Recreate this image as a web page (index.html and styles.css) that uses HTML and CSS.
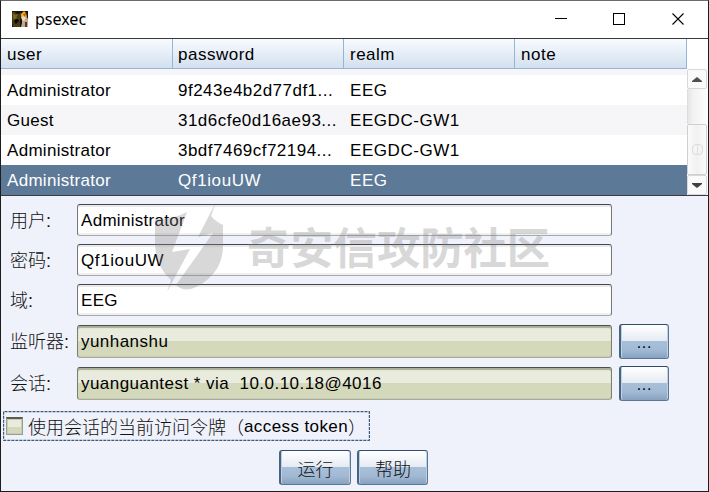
FILE: index.html
```
<!DOCTYPE html>
<html lang="zh-CN">
<head>
<meta charset="utf-8">
<title>psexec</title>
<link rel="stylesheet" href="styles.css">
</head>
<body>
<div class="window">
  <header class="titlebar">
    <svg class="app-icon" width="16" height="16" viewBox="0 0 16 16">
      <rect width="16" height="16" fill="#17130e"/>
      <path d="M0 1h3l2 2h2l2-2v4L8 9v7H1L0 9z" fill="#4b3c13"/>
      <path d="M1 2l2 2 3-1-2 4 3 2H2L1 6z" fill="#7c651d"/>
      <path d="M3 8h3l1 2-3 3-2-2z" fill="#0b0b0a"/>
      <path d="M10 5h4l2 3v8H9l1-4z" fill="#c2a890"/>
      <path d="M9 3l3-3 2 2 1 4-3-1-3 1z" fill="#e9b51d"/>
      <path d="M9 6l3-1 2 2-2 3-2-1z" fill="#f2dda8"/>
      <path d="M11 3l3-1-1 4z" fill="#d84b18"/>
      <path d="M13 11h2v5h-2z" fill="#4d3b35"/>
    </svg>
    <span class="title">psexec</span>
    <svg class="controls" width="156" height="14" viewBox="0 0 156 14" shape-rendering="crispEdges">
      <path d="M0 6.5h12" stroke="#000" fill="none"/>
      <rect x="58.500" y="1.500" width="11" height="11" stroke="#000" fill="none"/>
      <path d="M117.500 1.500l11 11m0-11l-11 11" stroke="#000" stroke-width="1.100" fill="none" shape-rendering="auto"/>
    </svg>
  </header>
  <section class="table">
    <div class="grid">
      <div class="row head"><span>user</span><span>password</span><span>realm</span><span>note</span></div>
      <div class="sliver"></div>
      <div class="row"><span>Administrator</span><span class="hash">9f243e4b2d77df1...</span><span class="caps">EEG</span><span></span></div>
      <div class="row alt"><span>Guest</span><span class="hash">31d6cfe0d16ae93...</span><span class="caps">EEGDC-GW1</span><span></span></div>
      <div class="row"><span>Administrator</span><span class="hash">3bdf7469cf72194...</span><span class="caps">EEGDC-GW1</span><span></span></div>
      <div class="row selected"><span>Administrator</span><span class="wide">Qf1iouUW</span><span class="caps">EEG</span><span></span></div>
    </div>
    <div class="scrollbar">
      <div class="corner"></div>
      <div class="arrow"><svg width="10" height="5"><path d="M0 5V4L5 0l5 4v1z" fill="#505050"/></svg></div>
      <div class="track"></div>
      <div class="thumb"><i></i></div>
      <div class="arrow"><svg width="10" height="5"><path d="M0 0h10v1L5 5 0 1z" fill="#404040"/></svg></div>
    </div>
  </section>
  <main class="form">
    <div class="line"><label>用户:</label><div class="field">Administrator</div></div>
    <div class="line"><label>密码:</label><div class="field wide">Qf1iouUW</div></div>
    <div class="line"><label>域:</label><div class="field">EEG</div></div>
    <div class="line pick"><label>监听器:</label><div class="field green">yunhanshu</div><div class="btn more">...</div></div>
    <div class="line pick"><label>会话:</label><div class="field green">yuanguantest * via&nbsp; 10.0.10.18@4016</div><div class="btn more">...</div></div>
    <div class="check"><i class="box"></i><span>使用会话的当前访问令牌（</span><span class="latin">access token</span><span>）</span>
      <svg class="focus" width="367" height="30"><rect x=".500" y=".500" width="366" height="29" rx="1" fill="none" stroke="#3d5b7b" stroke-width="1.400" stroke-dasharray="3 1"/></svg>
    </div>
    <div class="actions"><div class="btn run">运行</div><div class="btn help">帮助</div></div>
  </main>
  <div class="watermark">
    <svg width="72" height="92" viewBox="0 0 72 92">
      <path d="M2 18Q19 19 34 11L19 51L37 48L14 91L18 79Q3 66 2 43z"/>
      <path d="M63 1L45 36L60 32L23 84Q34 95 54 79Q70 66 70 45V24Q63 21 58 15z"/>
    </svg>
    <span>奇安信攻防社区</span>
  </div>
</div>
</body>
</html>
```
FILE: styles.css
```
* { box-sizing: border-box; }
body { margin: 0; font: 17px "Liberation Sans", "Noto Sans CJK SC", sans-serif; letter-spacing: .3px; color: #000; }
.window { position: relative; width: 709px; height: 492px; background: #eff2fb; border: 1px solid #1d1d1d; border-top-color: #6b6b6b; overflow: hidden; }
.titlebar { height: 37px; background: #fff; display: flex; align-items: center; padding-left: 11px; }
.app-icon { display: block; margin-top: -1px; }
.title { font: 16px "Noto Sans", sans-serif; letter-spacing: 0; margin: -1px 0 0 7px; flex: 1; }
.controls { display: block; margin-right: -3px; margin-top: -2px; }
.table { height: 158px; border-top: 1px solid #3a3a3a; border-bottom: 1px solid #3a3c44; display: flex; background: #fff; }
.grid { width: 686px; }
.row { display: grid; grid-template-columns: 172px 171px 171px 172px; height: 30px; line-height: 31px; }
.row span { padding-left: 6px; white-space: pre; overflow: hidden; }
.row span:not(:first-child) { padding-left: 5px; }
.head { background: linear-gradient(#f8fbff, #d3e0ef); border-bottom: 1px solid #94b5d5; letter-spacing: .5px; }
.head span { border-right: 1px solid #94b5d5; }
.head span:nth-child(n+3) { padding-left: 6px; }
.sliver { height: 6px; background: #f6f6f9; }
.alt { background: #f6f6f9; }
.selected { background: #5c7997; color: #fff; }
.row .caps:not(:first-child) { letter-spacing: .55px; padding-left: 6px; }
.row .hash { letter-spacing: .48px; }
.wide { letter-spacing: .6px; }
.scrollbar { width: 20px; display: flex; flex-direction: column; }
.corner { height: 30px; }
.arrow { height: 20px; border: 1px solid #d8d8d8; background: #fafafa; display: flex; align-items: center; justify-content: center; border-radius: 2px; flex: none; }
.track { height: 35px; background: linear-gradient(90deg, #e5e5e5, #f1f1f1 25%, #fdfdfd); border-left: 1px solid #ddd; }
.thumb { flex: 1; border: 1px solid #cfcfcf; border-radius: 2px; background: linear-gradient(90deg, #fafafa, #f1f1f1 50%, #fafafa); display: flex; align-items: center; justify-content: center; }
.thumb i { width: 11px; height: 11px; border: 1px solid #ddd; border-radius: 4px; background: linear-gradient(90deg, #f4f4f4 45%, #ddd 50%, #f4f4f4 55%); }
.form { padding: 8px 0 0; }
.line { display: flex; height: 33px; margin-bottom: 7px; align-items: flex-start; }
.line label { width: 76px; padding-left: 9px; font-size: 18px; font-weight: 300; line-height: 34px; letter-spacing: 0; color: #111; }
.field { width: 535px; height: 32px; border: 1px solid #a8a8a8; border-top: 1px solid #48484c; border-left-color: #777; border-right-color: #777; border-radius: 3px; background: #fff; box-shadow: inset 0 2px 1px #e9e9eb, inset 0 -2px 0 #f0f0f0; padding-left: 3px; line-height: 31px; white-space: pre; }
.pick { height: 35px; margin: 0 0 7px; align-items: flex-start; }
.pick label { line-height: 37px; }
.green { height: 33px; margin-top: 1px; letter-spacing: .46px; line-height: 32px; border-color: #4c5144 #7b806e #a6aa98; background: linear-gradient(#e9ecdc 50%, #d5d9bc 50%); box-shadow: inset 0 2px 1px #a9af96, inset 0 -1px 0 #c9cdb8; }
.btn { height: 35px; border: 1px solid #587696; border-top: 1px solid #2f4e6e; border-left: 2px solid #456583; border-radius: 3px; background: linear-gradient(#fff, #e5ebf3 49%, #a8bfd9 50%, #a3bad4 75%, #86a2c0); display: flex; align-items: center; justify-content: center; box-shadow: inset -1px 0 #c2d0df, inset 1px 0 #c2d0df; color: #111; font-size: 18px; font-weight: 300; letter-spacing: 0; }
.more { width: 50px; margin-left: 7px; font-size: 16px; letter-spacing: .8px; padding-top: 2px; color: #000; }
.check { position: relative; width: 367px; height: 30px; margin: 10px 0 9px 2px; display: flex; align-items: center; padding-left: 3px; font-size: 18px; font-weight: 300; letter-spacing: 0; color: #111; white-space: pre; }
.box { width: 17px; height: 18px; margin-right: 5px; border: 1px solid #999d8a; border-top: 2px solid #5b5d52; background: linear-gradient(#e9ecdc 50%, #d5d9bc 50%); box-shadow: inset 0 0 0 1px #c8cbb8; }
.latin { font-size: 17px; letter-spacing: .4px; color: #000; padding-top: 2px; }
.focus { position: absolute; left: 0; top: 0; }
.actions { display: flex; gap: 6px; padding-left: 278px; }
.run { width: 72px; }
.help { width: 71px; }
.watermark { position: absolute; left: 152px; top: 200px; display: flex; align-items: center; color: #808080; opacity: .3; pointer-events: none; }
.watermark path { fill: #808080; }
.watermark span { font: bold 43.300px/60px "Noto Sans CJK SC", sans-serif; letter-spacing: 0; margin: -5px 0 0 22px; white-space: nowrap; }
```
